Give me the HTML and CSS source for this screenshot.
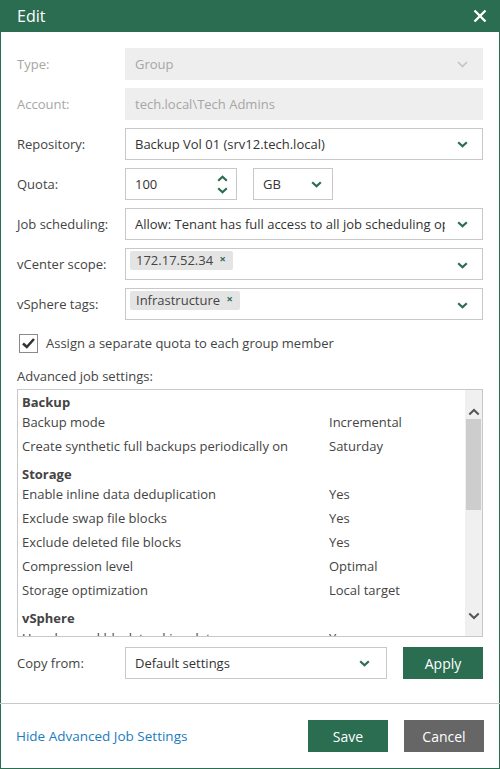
FILE: index.html
```html
<!DOCTYPE html>
<html>
<head>
<meta charset="utf-8">
<link rel="stylesheet" href="styles.css">
</head>
<body>
<div class="dialog">
  <div class="titlebar">
    <span class="title">Edit</span>
    <svg class="close" width="14" height="14" viewBox="0 0 14 14"><path d="M1.5 1.5 L12.5 12.5 M12.5 1.5 L1.5 12.5" stroke="#fff" stroke-width="2.4" fill="none"/></svg>
  </div>
  <div class="body">
    <div class="form">
      <div class="row">
        <label class="lbl disabled">Type:</label>
        <div class="field dis"><span>Group</span>
          <svg class="chev" width="11" height="7" viewBox="0 0 11 7"><path d="M1 1 L5.5 5.5 L10 1" stroke="#c4c4c4" stroke-width="1.6" fill="none"/></svg>
        </div>
      </div>
      <div class="row">
        <label class="lbl disabled">Account:</label>
        <div class="field dis"><span>tech.local\Tech Admins</span></div>
      </div>
      <div class="row">
        <label class="lbl">Repository:</label>
        <div class="field"><span>Backup Vol 01 (srv12.tech.local)</span>
          <svg class="chev" width="11" height="7" viewBox="0 0 11 7"><path d="M1.2 1.2 L5.5 5.3 L9.8 1.2" stroke="#2b6d50" stroke-width="2.2" fill="none"/></svg>
        </div>
      </div>
      <div class="row">
        <label class="lbl">Quota:</label>
        <div class="quota">
          <div class="field num"><span>100</span>
            <div class="spin">
              <svg width="11" height="7" viewBox="0 0 11 7"><path d="M1.2 5.8 L5.5 1.7 L9.8 5.8" stroke="#2b6d50" stroke-width="2.2" fill="none"/></svg>
              <svg width="11" height="7" viewBox="0 0 11 7"><path d="M1.2 1.2 L5.5 5.3 L9.8 1.2" stroke="#2b6d50" stroke-width="2.2" fill="none"/></svg>
            </div>
          </div>
          <div class="field unit"><span>GB</span>
            <svg class="chev" width="11" height="7" viewBox="0 0 11 7"><path d="M1.2 1.2 L5.5 5.3 L9.8 1.2" stroke="#2b6d50" stroke-width="2.2" fill="none"/></svg>
          </div>
        </div>
      </div>
      <div class="row">
        <label class="lbl">Job scheduling:</label>
        <div class="field"><span class="clip">Allow: Tenant has full access to all job scheduling options</span>
          <svg class="chev" width="11" height="7" viewBox="0 0 11 7"><path d="M1.2 1.2 L5.5 5.3 L9.8 1.2" stroke="#2b6d50" stroke-width="2.2" fill="none"/></svg>
        </div>
      </div>
      <div class="row">
        <label class="lbl">vCenter scope:</label>
        <div class="field tags"><span class="tag">172.17.52.34 <b class="x">×</b></span>
          <svg class="chev" width="11" height="7" viewBox="0 0 11 7"><path d="M1.2 1.2 L5.5 5.3 L9.8 1.2" stroke="#2b6d50" stroke-width="2.2" fill="none"/></svg>
        </div>
      </div>
      <div class="row">
        <label class="lbl">vSphere tags:</label>
        <div class="field tags"><span class="tag">Infrastructure <b class="x">×</b></span>
          <svg class="chev" width="11" height="7" viewBox="0 0 11 7"><path d="M1.2 1.2 L5.5 5.3 L9.8 1.2" stroke="#2b6d50" stroke-width="2.2" fill="none"/></svg>
        </div>
      </div>
    </div>

    <div class="check">
      <span class="box"><svg width="15" height="13" viewBox="0 0 15 13"><path d="M2 6.5 L5.8 10 L13 2" stroke="#333" stroke-width="2.6" fill="none"/></svg></span>
      <span>Assign a separate quota to each group member</span>
    </div>

    <div class="adv-label">Advanced job settings:</div>
    <div class="list">
      <div class="list-content">
        <div class="sec">Backup</div>
        <div class="item"><span>Backup mode</span><span>Incremental</span></div>
        <div class="item"><span>Create synthetic full backups periodically on</span><span>Saturday</span></div>
        <div class="sec gap">Storage</div>
        <div class="item"><span>Enable inline data deduplication</span><span>Yes</span></div>
        <div class="item"><span>Exclude swap file blocks</span><span>Yes</span></div>
        <div class="item"><span>Exclude deleted file blocks</span><span>Yes</span></div>
        <div class="item"><span>Compression level</span><span>Optimal</span></div>
        <div class="item"><span>Storage optimization</span><span>Local target</span></div>
        <div class="sec gap">vSphere</div>
        <div class="item"><span>Use changed block tracking data</span><span>Yes</span></div>
      </div>
      <div class="scrollbar">
        <svg class="sarrow" width="12" height="8" viewBox="0 0 12 8"><path d="M1.3 6.5 L6 2 L10.7 6.5" stroke="#555" stroke-width="2" fill="none"/></svg>
        <div class="track"><div class="thumb"></div></div>
        <svg class="sarrow" width="12" height="8" viewBox="0 0 12 8"><path d="M1.3 1.5 L6 6 L10.7 1.5" stroke="#555" stroke-width="2" fill="none"/></svg>
      </div>
    </div>

    <div class="row copy">
      <label class="lbl">Copy from:</label>
      <div class="field copysel"><span>Default settings</span>
        <svg class="chev" width="11" height="7" viewBox="0 0 11 7"><path d="M1.2 1.2 L5.5 5.3 L9.8 1.2" stroke="#2b6d50" stroke-width="2.2" fill="none"/></svg>
      </div>
      <button class="btn green apply">Apply</button>
    </div>
  </div>
  <div class="footer">
    <a class="link">Hide Advanced Job Settings</a>
    <div class="btns">
      <button class="btn green">Save</button>
      <button class="btn gray">Cancel</button>
    </div>
  </div>
</div>
</body>
</html>
```
FILE: styles.css
```css
* { box-sizing: border-box; }
html, body { margin: 0; padding: 0; }
body {
  width: 500px;
  height: 769px;
  background: #fff;
  font-family: "Open Sans", "Noto Sans", sans-serif;
  font-size: 13px;
  color: #333;
}
.dialog {
  width: 500px;
  height: 769px;
  border: 1px solid #2b6d50;
  border-top: none;
  display: flex;
  flex-direction: column;
}
.titlebar {
  height: 32px;
  background: #2b6d50;
  margin: 0 -1px;
  display: flex;
  align-items: center;
  justify-content: space-between;
  padding: 0 13px 0 17px;
  color: #fff;
}
.title { font-size: 16px; }
.close { display: block; }
.body {
  padding: 16px 16px 0 16px;
  flex: 1;
}
.form { display: flex; flex-direction: column; gap: 8px; }
.row { display: flex; align-items: center; height: 32px; }
.lbl { width: 108px; flex: none; color: #444; }
.lbl.disabled { color: #a6a6a6; }
.field {
  flex: 1;
  height: 32px;
  border: 1px solid #c8c8c8;
  display: flex;
  align-items: center;
  justify-content: space-between;
  padding: 0 14px 0 9px;
  color: #333;
  background: #fff;
  min-width: 0;
}
.field.dis { background: #eeeeee; border-color: #eeeeee; color: #a6a6a6; }
.chev { display: block; flex: none; }
.clip { overflow: hidden; white-space: nowrap; width: 310px; }
.quota { display: flex; gap: 16px; flex: 1; }
.field.num { flex: none; width: 112px; padding-right: 8px; }
.spin { display: flex; flex-direction: column; gap: 5px; }
.spin svg { display: block; }
.field.unit { flex: none; width: 80px; padding-right: 10px; }
.field.tags { align-items: flex-start; padding: 2px 14px 0 4px; }
.tags .chev { margin-top: 11px; }
.tag {
  background: #e4e4e4;
  border-radius: 2px;
  height: 19px;
  line-height: 18px;
  padding: 0 7px 0 6px;
  color: #444;
}
.tag .x { font-weight: 700; color: #2b6d50; font-size: 11px; margin-left: 3px; position: relative; top: -2px; }
.check {
  display: flex;
  align-items: center;
  gap: 8px;
  margin-top: 13px;
  height: 20px;
  padding-left: 2px;
  color: #444;
}
.box {
  width: 19px;
  height: 19px;
  border: 1px solid #8a8a8a;
  display: flex;
  align-items: center;
  justify-content: center;
}
.box svg { display: block; }
.adv-label { margin-top: 13px; height: 20px; line-height: 20px; color: #444; }
.list {
  margin-top: 3px;
  height: 248px;
  border: 1px solid #c8c8c8;
  display: flex;
  overflow: hidden;
}
.list-content { flex: 1; padding: 2px 0 0 4px; overflow: hidden; }
.sec { font-weight: 700; height: 20px; line-height: 20px; color: #444; }
.sec.gap { margin-top: 4px; }
.item { display: flex; height: 24px; line-height: 20px; padding-bottom: 4px; color: #444; white-space: nowrap; }
.item span:first-child { width: 307px; flex: none; }
.scrollbar {
  width: 17px;
  flex: none;
  background: #f0f0f0;
  display: flex;
  flex-direction: column;
  align-items: center;
  padding: 18px 0 16px;
}
.sarrow { display: block; flex: none; }
.track { flex: 1; width: 100%; padding: 3px 1px 0; }
.thumb { height: 91px; background: #cdcdcd; }
.copy { margin-top: 10px; gap: 0; }
.copysel { flex: none; width: 262px; padding-right: 16px; }
.btn {
  font-family: "Open Sans", "Noto Sans", sans-serif;
  font-size: 14px;
  border: none;
  width: 80px;
  height: 32px;
  color: #fff;
  padding: 0;
}
.green { background: #2b6d50; }
.gray { background: #666666; }
.apply { margin-left: 16px; }
.footer {
  border-top: 1px solid #c8c8c8;
  height: 65px;
  display: flex;
  align-items: center;
  justify-content: space-between;
  padding: 0 16px 0 16px;
  margin: 0 -1px;
  margin-bottom: 0;
}
.footer .btns { display: flex; gap: 16px; }
.link { color: #1a7dc0; font-size: 13.5px; }
```
